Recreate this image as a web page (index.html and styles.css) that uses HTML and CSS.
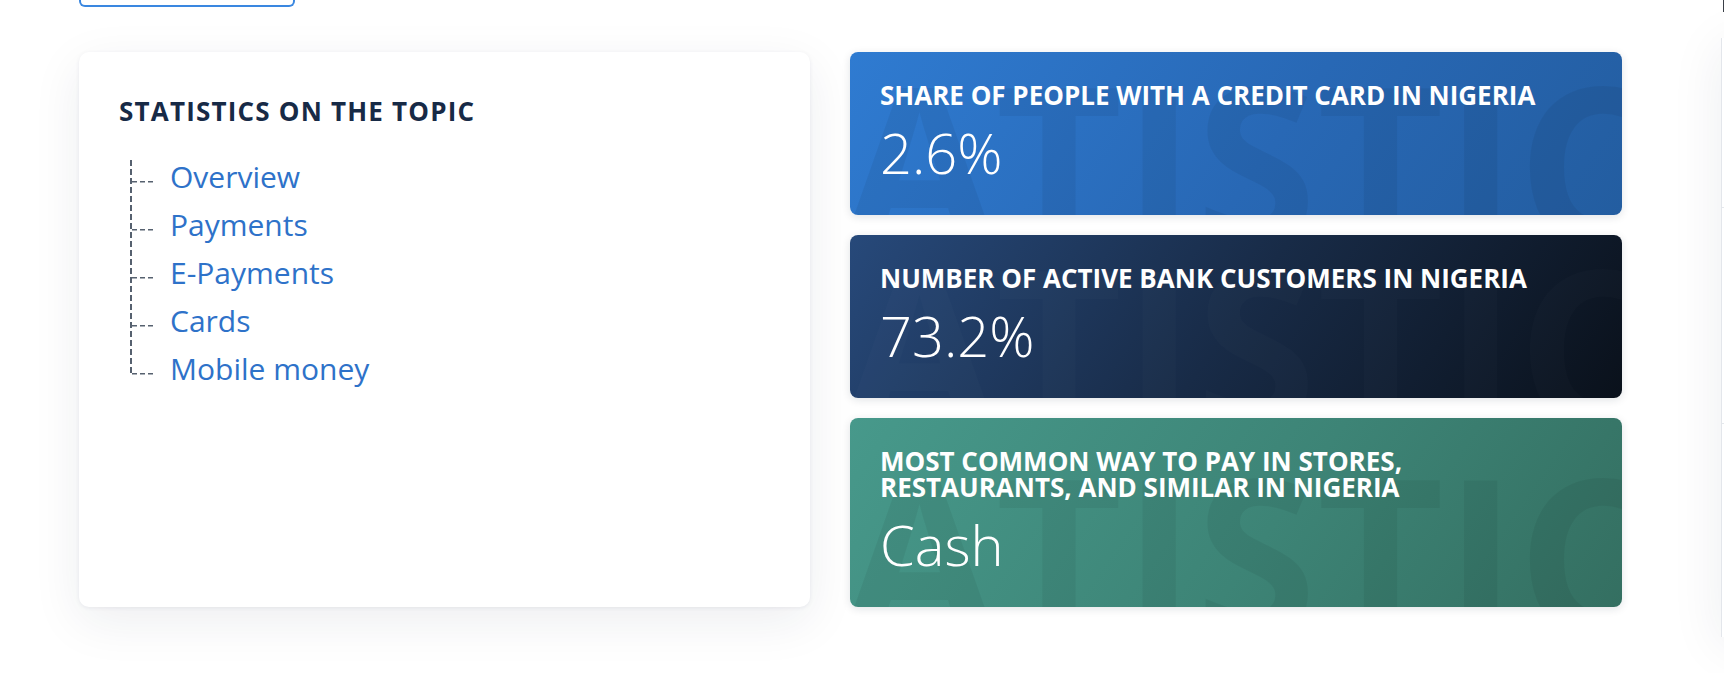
FILE: index.html
```html
<!DOCTYPE html>
<html lang="en">
<head>
<meta charset="utf-8">
<title>Statistics on the topic</title>
<link rel="stylesheet" href="styles.css">
</head>
<body>
  <div class="top">
    <div class="top-btn"></div>
    <div class="top-edge"></div>
  </div>
  <div class="row">
    <section class="topic-card">
      <h3 class="topic-title">Statistics on the topic</h3>
      <ul class="tree">
        <li class="tree-item"><a class="tree-link" href="#">Overview</a></li>
        <li class="tree-item"><a class="tree-link" href="#">Payments</a></li>
        <li class="tree-item"><a class="tree-link" href="#">E-Payments</a></li>
        <li class="tree-item"><a class="tree-link" href="#">Cards</a></li>
        <li class="tree-item"><a class="tree-link" href="#">Mobile money</a></li>
      </ul>
    </section>
    <div class="stats">
      <div class="stat stat-blue">
        <div class="stat-title">Share of people with a credit card in Nigeria</div>
        <div class="stat-value">2.6%</div>
      </div>
      <div class="stat stat-dark">
        <div class="stat-title">Number of active bank customers in Nigeria</div>
        <div class="stat-value">73.2%</div>
      </div>
      <div class="stat stat-green">
        <div class="stat-title">Most common way to pay in stores, restaurants, and similar in Nigeria</div>
        <div class="stat-value">Cash</div>
      </div>
    </div>
    <aside class="side">
      <div class="side-sec side-sec-1"></div>
      <div class="side-sec side-sec-2"></div>
      <div class="side-sec side-sec-3"></div>
    </aside>
  </div>
</body>
</html>
```
FILE: styles.css
```css
html, body {
  margin: 0;
  padding: 0;
  background: #ffffff;
  overflow: hidden;
}
body {
  font-family: "Open Sans", "Liberation Sans", sans-serif;
  width: 1724px;
  height: 673px;
}

.top {
  display: flex;
  align-items: flex-start;
  height: 7px;
}
.top-btn {
  margin-left: 79px;
  width: 216px;
  height: 7px;
  box-sizing: border-box;
  border: 2px solid #3a87e0;
  border-top: 0;
  border-radius: 0 0 6px 6px;
}
.top-edge {
  margin-left: auto;
  width: 1px;
  height: 12px;
  background: #3a3f47;
}

.row {
  display: flex;
  align-items: flex-start;
  gap: 40px;
  margin-top: 45px;
  padding-left: 79px;
}

.topic-card {
  flex: none;
  width: 731px;
  height: 555px;
  box-sizing: border-box;
  padding: 44px 40px;
  background: #ffffff;
  border-radius: 10px;
  box-shadow: 0 14px 50px rgba(25, 35, 65, 0.08), 0 1px 4px rgba(25, 35, 65, 0.07);
}
.topic-title {
  margin: 0;
  font-size: 26px;
  line-height: 31px;
  font-weight: 700;
  letter-spacing: 1.2px;
  text-transform: uppercase;
  color: #172a46;
}

.tree {
  position: relative;
  list-style: none;
  margin: 26px 0 0 11px;
  padding: 0;
}
.tree::before {
  content: "";
  position: absolute;
  left: 0;
  top: 7px;
  bottom: 19px;
  width: 1.5px;
  background: repeating-linear-gradient(to bottom, #56616f 0 6px, transparent 6px 9px);
}
.tree-item {
  padding-left: 40px;
  font-size: 30px;
  line-height: 48px;
  background-image: repeating-linear-gradient(to right, #56616f 0 5px, transparent 5px 8px);
  background-size: 22px 1.5px;
  background-position: 2px 28px;
  background-repeat: no-repeat;
}
.tree-link {
  color: #2e72c9;
  text-decoration: none;
}

.stats {
  flex: none;
  width: 772px;
  display: flex;
  flex-direction: column;
  gap: 20px;
}
.stat {
  position: relative;
  overflow: hidden;
  padding: 30px 30px 29px;
  border-radius: 8px;
  color: #ffffff;
  box-shadow: 0 2px 8px rgba(20, 30, 50, 0.12);
}
.stat::before {
  content: "STATISTICS";
  position: absolute;
  left: -255px;
  bottom: -55px;
  font-size: 220px;
  line-height: 220px;
  font-weight: 700;
  white-space: nowrap;
  color: rgba(0, 0, 0, 0.055);
  pointer-events: none;
}
.stat-blue {
  background: linear-gradient(125deg, #2f7bd1 0%, #2868b5 55%, #235da0 100%);
}
.stat-dark {
  background: linear-gradient(125deg, #27497a 0%, #182b47 50%, #0a111b 100%);
}
.stat-dark::before {
  color: rgba(255, 255, 255, 0.015);
}
.stat-green {
  background: linear-gradient(125deg, #47998b 0%, #3d8476 55%, #346f61 100%);
}
.stat-title {
  position: relative;
  font-size: 26px;
  line-height: 26px;
  font-weight: 700;
  text-transform: uppercase;
  max-width: 672px;
}
.stat-value {
  position: relative;
  margin-top: 11px;
  font-size: 56px;
  line-height: 67px;
  font-weight: 300;
}

.side {
  flex: none;
  width: 220px;
  height: 599px;
  margin-top: -14px;
  margin-left: 59px;
  background: #ffffff;
  border-left: 1px solid #e3e6eb;
  box-shadow: 0 8px 50px rgba(25, 35, 65, 0.08);
  display: flex;
  flex-direction: column;
}
.side-sec-1 {
  height: 169px;
  border-bottom: 1px solid #e5e8ec;
}
.side-sec-2 {
  height: 215px;
  border-bottom: 1px solid #e5e8ec;
}
.side-sec-3 {
  flex: 1;
}
```
